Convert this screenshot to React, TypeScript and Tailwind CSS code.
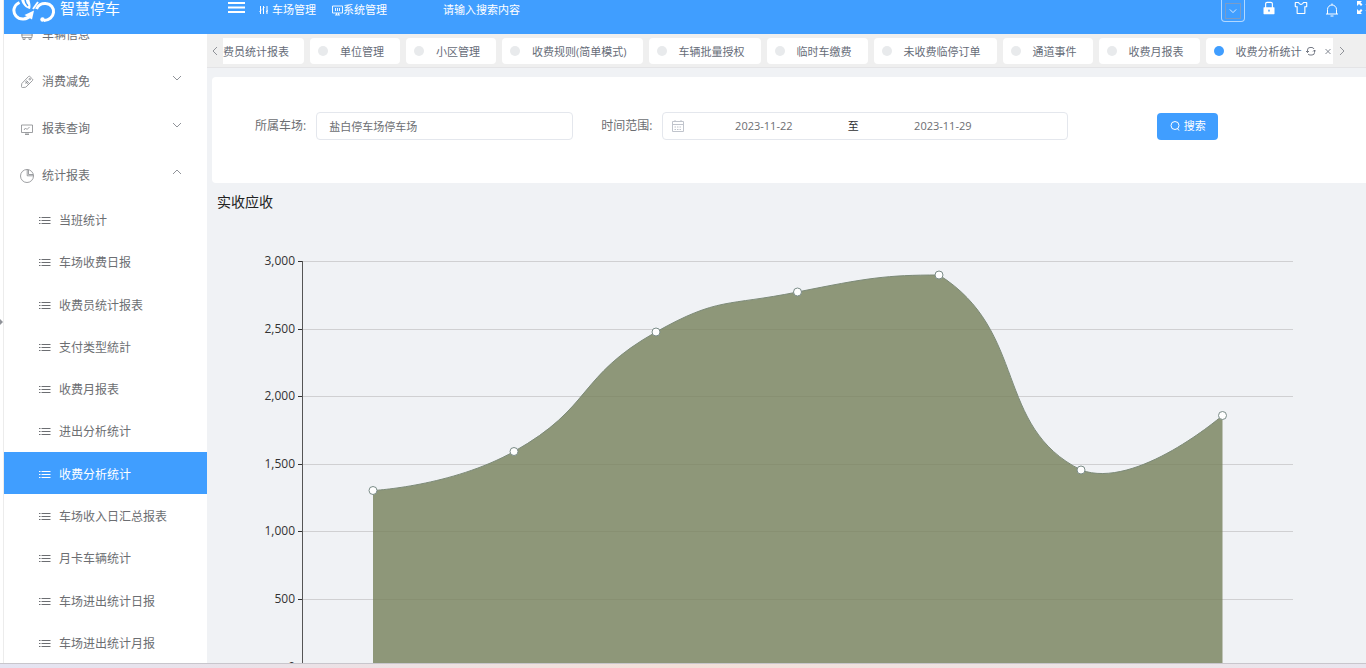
import { useState } from 'react';
import type { ReactNode } from 'react';
import { AiFillLock, AiOutlineSkin } from 'react-icons/ai';

const groups = [
    { name: '车辆信息', icon: 'car' },
    { name: '消费减免', icon: 'ticket' },
    { name: '报表查询', icon: 'board' },
    { name: '统计报表', icon: 'pie' },
];

const reports = [
    '当班统计',
    '车场收费日报',
    '收费员统计报表',
    '支付类型統計',
    '收费月报表',
    '进出分析统计',
    '收费分析统计',
    '车场收入日汇总报表',
    '月卡车辆统计',
    '车场进出统计日报',
    '车场进出统计月报',
];

const tabs = [
    '单位管理',
    '小区管理',
    '收费规则(简单模式)',
    '车辆批量授权',
    '临时车缴费',
    '未收费临停订单',
    '通道事件',
    '收费月报表',
];

const groupIcons: Record<string, ReactNode> = {
    car: <path d="M2 4v5.500h10V4M1 7h12M3 9.500v2h2v-2M9 9.500v2h2v-2" />,
    ticket: (
        <>
            <path d="M8.500 1.500a1 1 0 0 1 1.400 0l2.600 2.600a1 1 0 0 1 0 1.400L6 12a1 1 0 0 1-.700.300L2.500 12.500a1 1 0 0 1-1-1L1.700 9A1 1 0 0 1 2 8.300z" />
            <path d="m5 6.500 3.500 3M5.500 8.500 8 6M6 5.500l3.500 3" />
            <circle cx="9.800" cy="4.200" r=".8" />
        </>
    ),
    board: (
        <>
            <path d="M1.500 3h11v7.500h-11zM5 12.500h4M6 10.500v2M8 10.500v2" />
            <path d="m4 8 1.500-2 1.500 1.500L9.500 5" />
        </>
    ),
    pie: (
        <>
            <path d="M7 .500a6.500 6.500 0 1 0 6.500 6.500 6.500 6.500 0 0 0-6.500-6.500z" />
            <path d="M7.200.500v6.300h6.300M8.500.800v4.700h4.700" />
        </>
    ),
};

function Chevron({ d, className }: { d: string; className: string }) {
    return (
        <svg viewBox="0 0 10 10" fill="none" stroke="currentColor" className={className}>
            <path d={d} />
        </svg>
    );
}

function Logo() {
    return (
        <svg viewBox="0 0 44 24" fill="none" stroke="currentColor" strokeWidth="3" className="h-6 w-11">
            <path d="M7.500 2.500C2 5 0 11 4 16c4 4.500 11 4 15-1" />
            <path d="M24.500 9C26 5 30 3 34 3.500c5 .500 8 4.500 7.500 9C41 17 37 20.500 32 20.500" />
            <circle cx="30.500" cy="19.500" r="2.200" fill="currentColor" stroke="none" />
            <path d="M9-1c1 5 4 9 9 10 1-2 .500-6-1-10z" fill="currentColor" stroke="none" />
            <path d="M22 10.500 12.500 15l7.500 4.500z" fill="currentColor" stroke="none" />
            <path d="m21 9 5-7" strokeWidth="2" />
            <path d="M13-1c0 3 1 5 3 7" stroke="#409eff" strokeWidth="1.500" />
        </svg>
    );
}

function ListIcon() {
    return (
        <svg viewBox="0 0 12 10" fill="none" stroke="currentColor" className="h-2.5 w-3">
            <path d="M0 1.500h1.500M2.500 1.500h9M0 4.500h1.500M2.500 4.500h9M0 7.500h1.500M2.500 7.500h9" />
        </svg>
    );
}

function Header() {
    return (
        <header className="flex h-[34px] shrink-0 items-start bg-[#409eff] text-[11px] leading-5 text-white">
            <div className="flex w-[224px] gap-1 pl-2">
                <Logo />
                <span className="text-[15px] leading-4">智慧停车</span>
            </div>
            <button aria-label="折叠菜单" className="w-[17px]">
                <svg viewBox="0 0 17 16" stroke="currentColor" strokeWidth="2" className="h-4 w-[17px]">
                    <path d="M0 3h17M0 7.500h17M0 12h17" />
                </svg>
            </button>
            <nav className="flex gap-4 pl-[14px]">
                <a href="#park" className="flex items-center gap-[3px]">
                    <svg viewBox="0 0 10 10" fill="none" stroke="currentColor" className="h-2.5 w-2.5">
                        <path d="M1.500 1v8M4.500 1v8M8 1v8M.500 6.500 2.500 5M3.500 4l2-1.500M7 7l2-1.500" />
                    </svg>
                    车场管理
                </a>
                <a href="#system" className="flex items-center">
                    <svg viewBox="0 0 11 11" fill="none" stroke="currentColor" strokeWidth="0.900" className="h-[11px] w-[11px]">
                        <path d="M.500 1h10v7h-10zM3 10h5M4.500 8v2M6.500 8v2M3.500 3v3M5.500 3v3M7.500 3v3" />
                    </svg>
                    系统管理
                </a>
            </nav>
            <input
                aria-label="搜索"
                placeholder="请输入搜索内容"
                className="ml-14 h-5 w-40 bg-transparent outline-none placeholder:text-white"
            />
            <div className="ml-auto flex items-start">
                <button aria-label="展开" className="flex h-[22px] w-6 items-center justify-center rounded-b border border-t-0 border-white/60">
                    <span className="flex h-4 w-4 items-center justify-center border border-[#7a9cc8]">
                        <Chevron d="m1 3 4 4 4-4" className="h-2 w-2 shrink-0" />
                    </span>
                </button>
                <div className="flex items-start gap-4 pl-4">
                    <button aria-label="锁屏"><AiFillLock className="h-4 w-4" /></button>
                    <button aria-label="主题"><AiOutlineSkin className="h-4 w-4" /></button>
                    <button aria-label="消息" className="pt-[3px]">
                        <svg viewBox="0 0 14 14" fill="none" stroke="currentColor" className="h-3.5 w-3.5">
                            <path d="M1 11h12M2.500 11V6.500a4.500 4.500 0 0 1 9 0V11M7 .500V2M5.500 13h3" />
                        </svg>
                    </button>
                </div>
                <button aria-label="全屏" className="w-[27px] overflow-hidden pl-[17px]">
                    <svg viewBox="0 0 16 16" fill="currentColor" className="h-4 w-4 max-w-none">
                        <path d="M1 1h5L4.500 2.500l2 2-1.500 1.500-2-2L1 6zM1 14h5l-1.500-1.500 2-2L5 9l-2 2-2-2zM15 1h-5l1.500 1.500-2 2L11 6l2-2 2 2zM15 14h-5l1.500-1.500-2-2L11 9l2 2 2-2z" />
                    </svg>
                </button>
            </div>
        </header>
    );
}

function Sidebar({ active, onSelect }: { active: string; onSelect: (name: string) => void }) {
    return (
        <aside className="flex w-[203px] shrink-0 flex-col overflow-hidden bg-white text-xs text-[#6c6e72]">
            <div className="-mt-6 pt-px">
                {groups.map((group, i) => (
                    <button key={group.name} className="flex h-[47px] w-full items-center gap-2 pr-[25px] pl-4 text-left">
                        <svg viewBox="0 0 14 14" fill="none" stroke="#85888c" strokeWidth="0.800" className="h-3.5 w-3.5">
                            {groupIcons[group.icon]}
                        </svg>
                        <span className="flex-1">{group.name}</span>
                        <Chevron
                            d={i === groups.length - 1 ? 'm1 6 4-4 4 4' : 'm1 2 4 4 4-4'}
                            className="mb-1.5 h-2.5 w-2.5 text-[#909399]"
                        />
                    </button>
                ))}
            </div>
            <ul className="-mt-px flex flex-1 flex-col">
                {reports.map((name) => (
                    <li key={name} className="flex flex-1">
                        <button
                            onClick={() => onSelect(name)}
                            className={`flex flex-1 items-center gap-2 pt-1 pl-[35px] ${name === active ? 'bg-[#409eff] text-white' : ''}`}
                        >
                            <ListIcon />
                            {name}
                        </button>
                    </li>
                ))}
            </ul>
        </aside>
    );
}

function TabBar() {
    return (
        <div className="flex h-[34px] shrink-0 items-center border-b border-[#e4e4e6] bg-[#efefef] text-[11px] leading-4 text-[#666c78]">
            <button aria-label="向左" className="flex w-4 justify-center">
                <Chevron d="M7 1 3 5l4 4" className="h-2.5 w-2.5 text-[#909399]" />
            </button>
            <div className="flex gap-1.5 whitespace-nowrap">
                <button className="h-[26px] rounded-r-sm bg-white pt-0.5 pr-[15px]">费员统计报表</button>
                {tabs.map((tab) => (
                    <button key={tab} className="flex h-[26px] items-center gap-3 rounded-sm bg-white pr-4 pl-2">
                        <span className="h-2.5 w-2.5 rounded-full bg-[#e8eaec]" />
                        <span className="pt-0.5">{tab}</span>
                    </button>
                ))}
                <div className="flex h-[26px] items-center rounded-l-sm bg-white pr-px pl-2">
                    <span className="mr-3 h-2.5 w-2.5 rounded-full bg-[#409eff]" />
                    <span className="pt-0.5">收费分析统计</span>
                    <button aria-label="刷新" className="ml-1">
                        <svg viewBox="0 0 10 10" fill="none" stroke="currentColor" strokeWidth="0.900" className="h-2.5 w-2.5">
                            <path d="M1.500 6.500V4a2.500 2.500 0 0 1 2.500-2.500h2A2.500 2.500 0 0 1 8 3M0 5l1.500 1.500L3 5M8.500 4v2.500A2.500 2.500 0 0 1 6 9H4A2.500 2.500 0 0 1 2 8M10 5.500 8.500 4 7 5.500" />
                        </svg>
                    </button>
                    <button aria-label="关闭" className="ml-2">
                        <svg viewBox="0 0 8 8" stroke="currentColor" strokeWidth="0.800" className="h-2 w-2">
                            <path d="m1.500 2 5 5M6.500 2l-5 5" />
                        </svg>
                    </button>
                </div>
            </div>
            <button aria-label="向右" className="pl-1">
                <Chevron d="m3 1 4 4-4 4" className="h-2.5 w-2.5 text-[#909399]" />
            </button>
        </div>
    );
}

function FilterForm() {
    return (
        <form className="mt-[9px] ml-[5px] flex items-center rounded-l bg-white pt-[35px] pb-[43px] pl-[43px] text-xs text-[#6c6e72]">
            <label htmlFor="park">所属车场:</label>
            <input
                id="park"
                defaultValue="盐白停车场停车场"
                className="ml-[10px] h-7 w-[257px] rounded border border-[#e4e7ed] px-3 text-[11px] outline-none"
            />
            <label htmlFor="start" className="ml-7">时间范围:</label>
            <div className="ml-[10px] flex h-7 w-[406px] items-center rounded border border-[#e4e7ed] px-2 text-[11px]">
                <svg viewBox="0 0 14 14" fill="none" stroke="#c0c4cc" className="h-3.5 w-3.5">
                    <path d="M1.500 2.500h11v10h-11zM1.500 5.500h11M4 1v2M10 1v2" />
                    <path d="M3.500 8h7M3.500 10.500h7" strokeDasharray="1.500 1" />
                </svg>
                <input id="start" defaultValue="2023-11-22" className="w-[157px] text-center outline-none" />
                <span className="w-[22px] text-center text-[#303133]">至</span>
                <input aria-label="结束日期" defaultValue="2023-11-29" className="w-[157px] text-center outline-none" />
            </div>
            <button type="button" className="ml-[89px] flex h-[27px] w-[61px] items-center justify-center gap-1 rounded-sm bg-[#409eff] text-[11px] text-white">
                <svg viewBox="0 0 10 10" fill="none" stroke="currentColor" className="h-2.5 w-2.5">
                    <circle cx="5" cy="4.500" r="4" />
                    <path d="m7.500 7.500 1.500 2" />
                </svg>
                搜索
            </button>
        </form>
    );
}

const points = [
    [166, 278.5], [307, 239.5], [449, 120], [590.5, 80], [732, 63], [874, 258], [1015.5, 203.5],
];
const gridLabels = ['3,000', '2,500', '2,000', '1,500', '1,000', '500', '0'];
const gridTop = 50;
const gridStep = 67.6;
const baseLine = gridTop + gridStep * 6;

// Bezier through all points, control points kept inside the bounds of the series
function smoothPath(pts: number[][]) {
    const minY = Math.min(...pts.map((p) => p[1]));
    const maxY = Math.max(...pts.map((p) => p[1]));
    const clamp = (y: number) => Math.max(minY, Math.min(maxY, y));
    let d = `M${pts[0][0]} ${pts[0][1]}`;
    let cp = pts[0];
    for (let i = 1; i < pts.length; i++) {
        const [x, y] = pts[i];
        const prev = pts[i - 1];
        const next = pts[i + 1];
        if (!next) {
            d += `C${cp[0]} ${cp[1]} ${x} ${y} ${x} ${y}`;
            break;
        }
        const vx = (next[0] - prev[0]) * 0.5;
        const vy = (next[1] - prev[1]) * 0.5;
        const lenPrev = Math.hypot(x - prev[0], y - prev[1]);
        const lenNext = Math.hypot(next[0] - x, next[1] - y);
        const ratio = lenNext / (lenPrev + lenNext);
        d += `C${cp[0]} ${cp[1]} ${x - vx * (1 - ratio)} ${clamp(y - vy * (1 - ratio))} ${x} ${y}`;
        cp = [x + vx * ratio, clamp(y + vy * ratio)];
    }
    return d;
}

function Chart() {
    const line = smoothPath(points);
    return (
        <svg viewBox="0 0 1159 451" preserveAspectRatio="xMinYMin slice" className="min-h-0 w-full flex-1">
            {gridLabels.map((label, i) => {
                const y = Math.round(gridTop + gridStep * i) - 0.5;
                return (
                    <g key={label}>
                        <path d={`M95 ${y}H1086`} stroke="#d0d0d2" />
                        <path d={`M91 ${y}H95`} stroke="#333" />
                        <text x="88" y={y + 3} textAnchor="end" fontSize="12" fill="#333">{label}</text>
                    </g>
                );
            })}
            <path d={`M95.500 49V${baseLine}`} stroke="#555" />
            <path d={`${line}V${baseLine}H${points[0][0]}Z`} fill="#757f5a" fillOpacity="0.8" />
            <path d={line} fill="none" stroke="#7c8a78" />
            {points.map(([x, y]) => (
                <circle key={x} cx={x} cy={y} r="4" fill="#fff" stroke="#7b8c88" />
            ))}
        </svg>
    );
}

export default function App() {
    const [active, setActive] = useState('收费分析统计');

    return (
        <div className="flex h-screen flex-col overflow-hidden bg-white font-['Open_Sans','Noto_Sans_CJK_SC',sans-serif]">
            <div className="relative flex min-h-0 flex-1 flex-col pl-[3px]">
                <div className="flex min-h-0 flex-1 flex-col border-l border-[#ececec]">
                    <Header />
                    <div className="flex min-h-0 flex-1">
                        <Sidebar active={active} onSelect={setActive} />
                        <main className="flex min-w-0 flex-1 flex-col bg-[#f0f2f5]">
                            <TabBar />
                            <FilterForm />
                            <h2 className="pt-[9px] pl-[10px] text-sm leading-5 text-[#222]">实收应收</h2>
                            <Chart />
                        </main>
                    </div>
                </div>
                <span className="absolute top-[319px] left-0 h-0 w-0 border-y-3 border-l-3 border-y-transparent border-l-[#909399]" />
            </div>
            <footer className="h-[5px] shrink-0 border-t border-[#c8c6cc] bg-linear-to-r from-[#e4e4f2] via-[#f3dfd8] to-[#e9e6ef]" />
        </div>
    );
}
